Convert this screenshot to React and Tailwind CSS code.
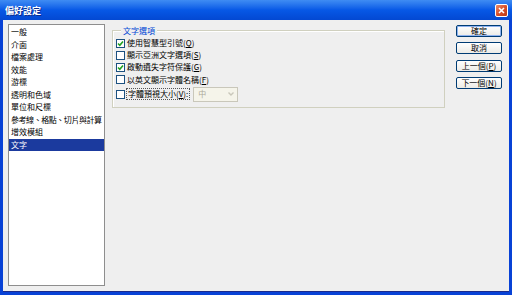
import React from "react";

const font = { fontFamily: '"Noto Sans CJK TC", "Noto Sans", sans-serif' };

function Check({ checked }) {
  return (
    <span className="flex h-[9px] w-[9px] shrink-0 items-center justify-center border border-[#1c5180] bg-white">
      {checked && (
        <svg width="7" height="7" viewBox="0 0 7 7">
          <path d="M1 3.5 L2.8 5.3 L6 1.5" fill="none" stroke="#21a121" strokeWidth="1.6" />
        </svg>
      )}
    </span>
  );
}

function Btn({ children, def }) {
  return (
    <div
      className={`flex h-[12px] w-[46px] items-center justify-center rounded-[2px] border border-[#003c74] bg-gradient-to-b from-white to-[#ecebe6] text-[8px] leading-none text-black ${
        def ? "shadow-[inset_0_0_0_1px_#8fb3f0]" : ""
      }`}
    >
      {children}
    </div>
  );
}

export default function App() {
  const items = [
    "一般",
    "介面",
    "檔案處理",
    "效能",
    "游標",
    "透明和色域",
    "單位和尺標",
    "參考線、格點、切片與計算",
    "增效模組",
    "文字",
  ];
  return (
    <div style={font} className="flex h-[295px] w-[512px] flex-col overflow-hidden bg-[#0842d6]">
      {/* title bar */}
      <div className="relative flex h-[20px] shrink-0 items-center bg-gradient-to-b from-[#3f8cf3] via-[#0758e6] to-[#0348d2] pl-[5px]">
        <span className="text-[9px] font-bold leading-none text-white [text-shadow:1px_1px_0_#0b2a8a]">偏好設定</span>
        <div className="absolute left-[495px] top-[4px] flex h-[13px] w-[13px] items-center justify-center rounded-[2px] border border-white bg-gradient-to-br from-[#e88a6a] via-[#d9502a] to-[#b83a16]">
          <svg width="7" height="7" viewBox="0 0 7 7">
            <path d="M1 1 L6 6 M6 1 L1 6" stroke="white" strokeWidth="1.6" />
          </svg>
        </div>
      </div>
      {/* body */}
      <div className="mx-[3px] mb-[3px] flex flex-1 border-b border-[#1a2b8c] bg-[#efefef] pb-[5px] pl-[5px] pr-[7px] pt-[4px]">
        {/* list */}
        <div className="flex w-[97px] flex-col border border-[#8e8e8e] bg-white pt-[1px]">
          {items.map((t) => (
            <div
              key={t}
              className={`flex h-[12.5px] shrink-0 items-center whitespace-nowrap pl-[2px] text-[8px] leading-none ${
                t === "文字" ? "bg-[#1b3a9e] text-white" : "text-black"
              } ${t.length > 8 ? "tracking-[-0.45px]" : ""}`}
            >
              {t}
            </div>
          ))}
        </div>
        {/* group */}
        <div className="ml-[7px] w-[333px] pt-[6px]">
          <div className="relative border border-[#d0d0bf] pb-[5px] pl-[3px] pt-[6px] shadow-[inset_1px_1px_0_white]">
            <span className="absolute left-[8px] top-[-6px] bg-[#efefef] px-[2px] text-[8px] leading-[11px] text-[#0046d5]">
              文字選項
            </span>
            <div className="flex h-[12px] items-center gap-[2px] text-[8px] leading-none text-black">
              <Check checked />
              <span>使用智慧型引號(<u>Q</u>)</span>
            </div>
            <div className="flex h-[12px] items-center gap-[2px] text-[8px] leading-none text-black">
              <Check />
              <span>顯示亞洲文字選項(<u>S</u>)</span>
            </div>
            <div className="flex h-[12px] items-center gap-[2px] text-[8px] leading-none text-black">
              <Check checked />
              <span>啟動遺失字符保護(<u>G</u>)</span>
            </div>
            <div className="flex h-[13px] items-center gap-[2px] text-[8px] leading-none text-black">
              <Check />
              <span>以英文顯示字體名稱(<u>F</u>)</span>
            </div>
            <div className="flex h-[16px] items-center gap-[1px] text-[8px] leading-none text-black">
              <Check />
              <span className="border border-dotted border-[#555] px-[1px] py-[1px]">
                字體預視大小(<u>V</u>):
              </span>
              <div className="ml-[2px] flex h-[15px] w-[45px] items-center justify-between border border-[#c9c7ba] bg-[#f5f4ea] pl-[4px] pr-[2px] text-[#aca899]">
                <span>中</span>
                <svg width="8" height="6" viewBox="0 0 8 6">
                  <path d="M1.5 1.5 L4 4 L6.5 1.5" fill="none" stroke="#c9c7ba" strokeWidth="1.4" />
                </svg>
              </div>
            </div>
          </div>
        </div>
        {/* buttons */}
        <div className="ml-[11px] flex flex-col pt-[1px]">
          <Btn def>確定</Btn>
          <div className="mt-[5px]">
            <Btn>取消</Btn>
          </div>
          <div className="mt-[6px]">
            <Btn>上一個(<u>P</u>)</Btn>
          </div>
          <div className="mt-[5px]">
            <Btn>下一個(<u>N</u>)</Btn>
          </div>
        </div>
      </div>
    </div>
  );
}
